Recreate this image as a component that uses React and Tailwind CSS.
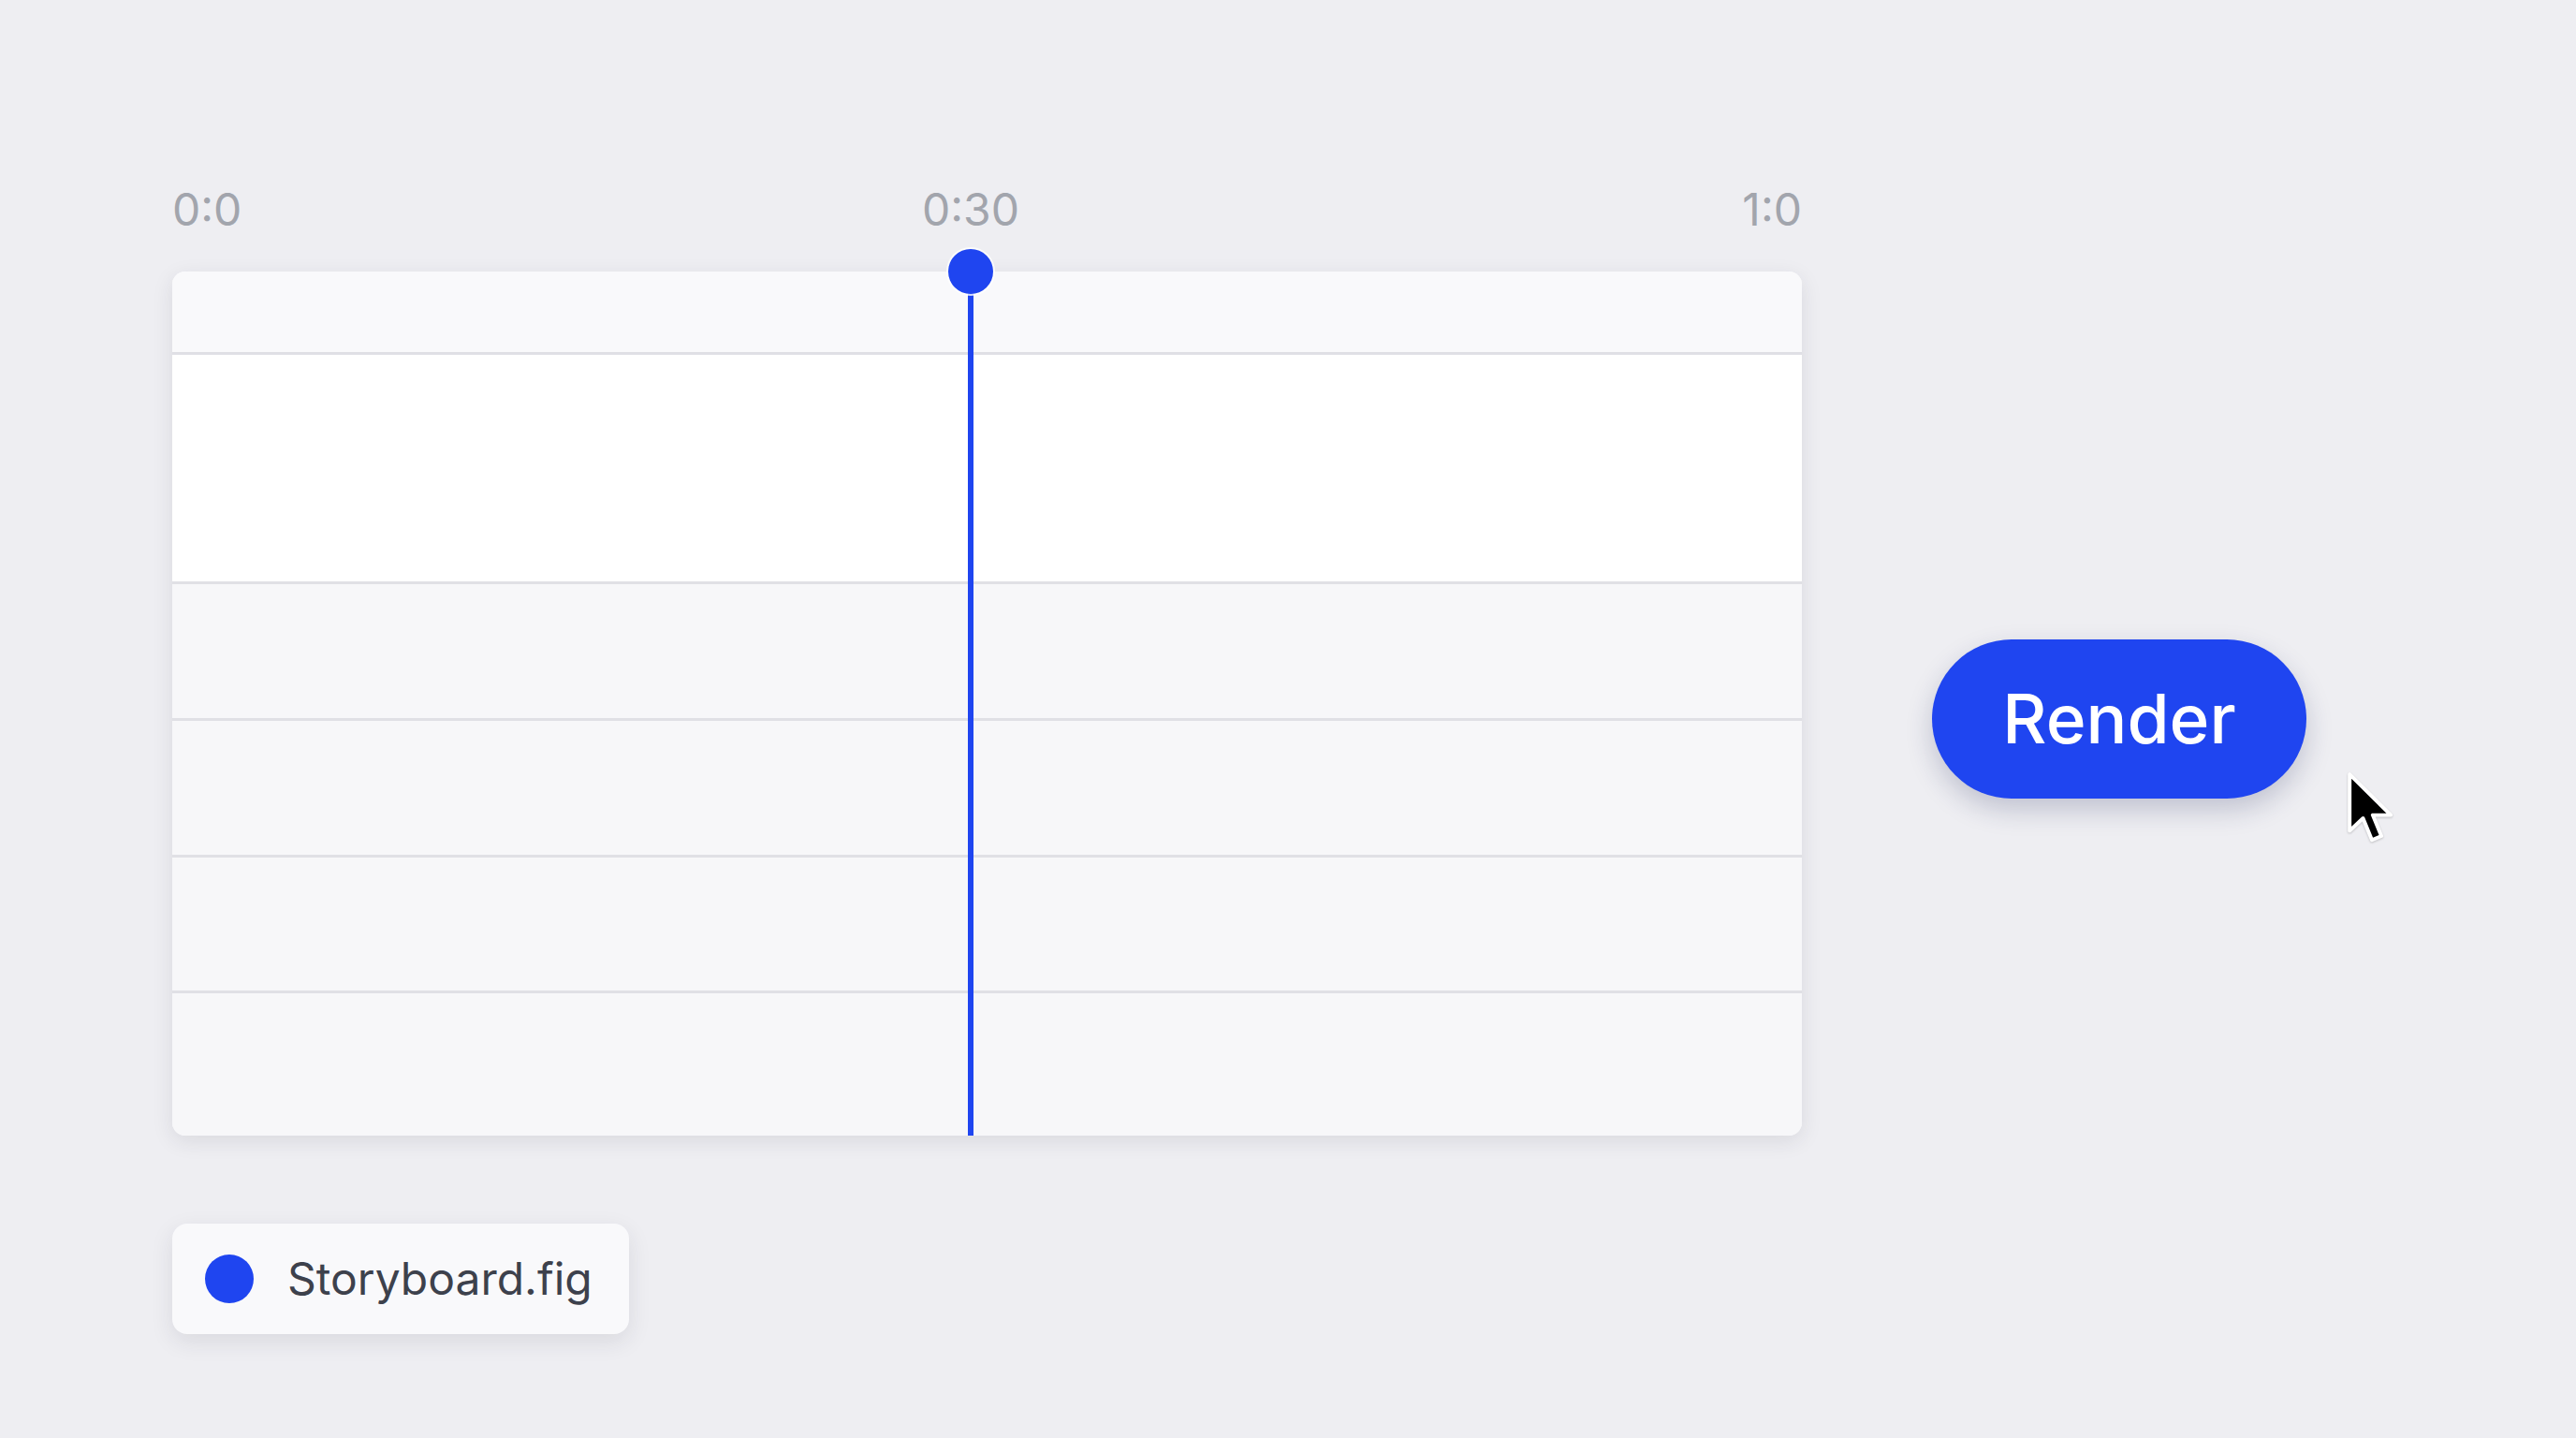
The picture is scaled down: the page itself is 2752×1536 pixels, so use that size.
import React from "react";

const rows = [
  { h: "h-[245px]", bg: "bg-white" },
  { h: "h-[146px]", bg: "bg-[#f7f7f9]" },
  { h: "h-[146px]", bg: "bg-[#f7f7f9]" },
  { h: "h-[145px]", bg: "bg-[#f7f7f9]" },
  { h: "h-[155px]", bg: "bg-[#f7f7f9]" },
];

const Cursor = () => (
  <svg width="56" height="84" viewBox="0 0 20 30" className="drop-shadow-[0_1px_1px_rgba(0,0,0,0.2)]">
    <path
      d="M1.5 1.5 L1.5 23 L6.6 18.2 L10 26.5 L13.6 25 L10.3 17 L17.2 17 Z"
      fill="#000"
      stroke="#fff"
      strokeWidth="1.4"
      strokeLinejoin="round"
    />
  </svg>
);

export default function App() {
  return (
    <div className="min-h-screen w-full bg-[#eeeef2] font-['Inter',sans-serif] pl-[184px] pt-[200px]">
      <div className="flex items-start">
        {/* timeline column */}
        <div className="w-[1741px]">
          <div className="relative flex justify-between h-[48px] text-[48px] leading-[48px] text-[#a2a5ad]">
            <span>0:0</span>
            <span className="absolute left-[853px] -translate-x-1/2">0:30</span>
            <span>1:0</span>
          </div>

          <div className="relative mt-[42px] rounded-[14px] bg-[#f9f9fb] shadow-[0_6px_22px_rgba(40,40,60,0.10)]">
            <div className="overflow-hidden rounded-[14px]">
              <div className="h-[86px] bg-[#f9f9fb]" />
              {rows.map((r, i) => (
                <div key={i} className={`${r.h} ${r.bg} border-t-[3px] border-[#e0e0e5]`} />
              ))}
            </div>
            {/* playhead */}
            <div className="absolute left-[850px] top-0 bottom-0 w-[6px] bg-[#1f45f0]" />
            <div className="absolute left-[829px] top-[-24px] w-[48px] h-[48px] rounded-full bg-[#1f45f0] ring-2 ring-white/80" />
          </div>

          <div className="mt-[94px] inline-flex items-center h-[118px] w-[488px] rounded-[16px] bg-[#f9f9fb] shadow-[0_8px_24px_rgba(40,40,60,0.10)] pl-[35px]">
            <span className="w-[52px] h-[52px] rounded-full bg-[#1f45f0]" />
            <span className="ml-[36px] text-[48px] text-[#3d414c]">Storyboard.fig</span>
          </div>
        </div>

        {/* render button */}
        <div className="relative ml-[139px] mt-[483px]">
          <button className="w-[400px] h-[170px] rounded-full bg-[#1f45f0] text-white text-[73px] font-medium shadow-[0_12px_28px_rgba(30,40,90,0.22)]">
            Render
          </button>
          <div className="absolute left-[442px] top-[140px]">
            <Cursor />
          </div>
        </div>
      </div>
    </div>
  );
}
